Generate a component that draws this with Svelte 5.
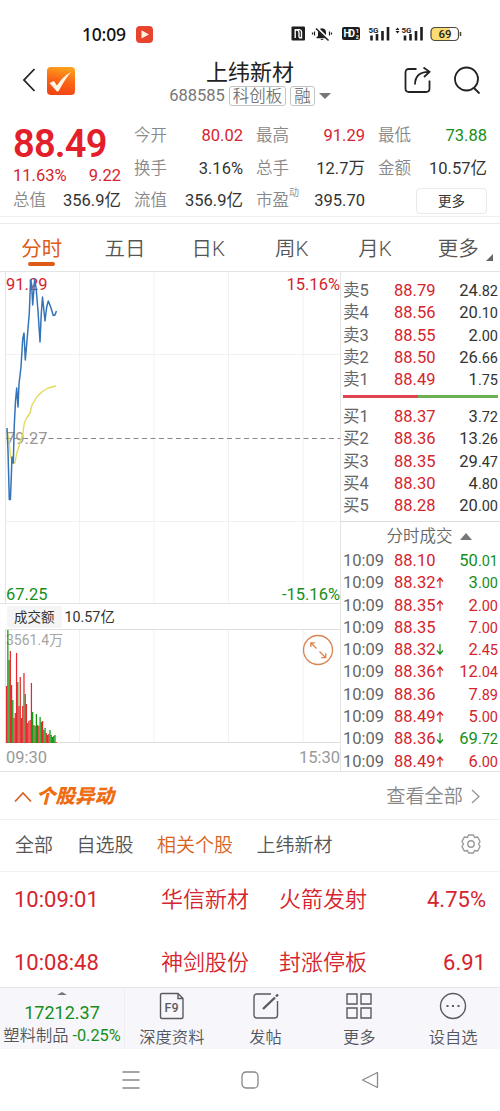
<script>
	const stats = [
		{ label: '今开', value: '80.02', tone: 'up' },
		{ label: '最高', value: '91.29', tone: 'up' },
		{ label: '最低', value: '73.88', tone: 'down' },
		{ label: '换手', value: '3.16%' },
		{ label: '总手', value: '12.7万' },
		{ label: '金额', value: '10.57亿' },
		{ label: '流值', value: '356.9亿' },
		{ label: '市盈', sup: '动', value: '395.70' }
	];

	const periods = ['分时', '五日', '日K', '周K', '月K', '更多'];

	const sells = [
		['卖5', '88.79', '24.82'],
		['卖4', '88.56', '20.10'],
		['卖3', '88.55', '2.00'],
		['卖2', '88.50', '26.66'],
		['卖1', '88.49', '1.75']
	];

	const buys = [
		['买1', '88.37', '3.72'],
		['买2', '88.36', '13.26'],
		['买3', '88.35', '29.47'],
		['买4', '88.30', '4.80'],
		['买5', '88.28', '20.00']
	];

	// time, price, arrow, volume, side
	const trades = [
		['10:09', '88.10', '', '50.01', 'down'],
		['10:09', '88.32', 'up', '3.00', 'down'],
		['10:09', '88.35', 'up', '2.00', 'up'],
		['10:09', '88.35', '', '7.00', 'up'],
		['10:09', '88.32', 'down', '2.45', 'up'],
		['10:09', '88.36', 'up', '12.04', 'up'],
		['10:09', '88.36', '', '7.89', 'up'],
		['10:09', '88.49', 'up', '5.00', 'up'],
		['10:09', '88.36', 'down', '69.72', 'down'],
		['10:09', '88.49', 'up', '6.00', 'up']
	];

	const priceLine =
		'7,157 8,180 9.3,228.5 10.4,228.5 11.2,208 12,186 13.3,192 14.2,156 15.5,130 16.7,117 18,136 19,113 21,96 22.7,68 24,62 25.3,89 27.3,66 29.3,42 30.6,9 31.6,13 32.7,34 34.7,8 36.2,18 38,40 40,71 41.2,44 42.5,26 45,50 46.7,36 48.3,30 50.7,36 53.3,44.5 55,44 56.4,40';
	const averageLine =
		'7,160 8.5,166 10.7,186 12.7,192 15,192 16.7,182 20,172 22.7,164 24.3,152 26.7,147 30,142 32,134 36.7,126 41.7,121 48,117 56,115';

	// one bar per minute: height and side
	const volumes =
		'57r 113g 83g 92r 58r 43g 25r 30r 90r 61g 37r 66r 25r 37r 70r 49g 39r 20r 22r 23r 60r 31g 18r 17g 29g 18g 17r 26g 21g 22r 13g 15g 10r 8g 9r 13g 8g 6g 7g 8g 1r'
			.split(' ')
			.map((v) => ({ h: parseInt(v), color: v.endsWith('r') ? '#e8262b' : '#10960f' }));

	const columns = [79.5, 154, 228.5, 303];

	const feedTabs = ['全部', '自选股', '相关个股', '上纬新材'];
	const feed = [
		['10:09:01', '华信新材', '火箭发射', '4.75%'],
		['10:08:48', '神剑股份', '封涨停板', '6.91']
	];
</script>

{#snippet qty(value)}
	{value.split('.')[0]}<small>.{value.split('.')[1]}</small>
{/snippet}

{#snippet book(rows)}
	{#each rows as [name, price, amount]}
		<div class="line">
			<span class="name">{name}</span>
			<span class="price up">{price}</span>
			<span class="amount">{@render qty(amount)}</span>
		</div>
	{/each}
{/snippet}

<div class="phone">
	<div class="status">
		<span class="clock">10:09</span>
		<svg width="17" height="17" viewBox="0 0 17 17">
			<rect width="17" height="17" rx="4" fill="#e8432f" />
			<path d="M5.5 4.2L13 8.5L5.5 12.6Z" fill="#fff3dc" />
		</svg>
		<svg class="indicators" width="172" height="18" viewBox="0 0 172 18">
			<!-- nfc -->
			<rect x="0.5" y="1.5" width="13.5" height="14" rx="1" fill="#1d1d1f" />
			<path d="M4.2 13V4.8Q8 4.5 8 8V12.5M6.2 4.6H8.5Q10.5 5 10.5 7V12.8H8" stroke="#fff" stroke-width="1.4" fill="none" />
			<!-- muted bell -->
			<path d="M25.5 13.2V12.3L27 11V7.5Q27 3.5 31 3.2Q35 3.5 35 7.5V11L36.5 12.3V13.2ZM29.3 14H32.7Q31 16 29.3 14Z" fill="#1d1d1f" />
			<path d="M26 3L37.5 14.5" stroke="#fff" stroke-width="2.6" />
			<path d="M25 3.5L37.5 15.5" stroke="#1d1d1f" stroke-width="1.5" />
			<path d="M23.5 6.5V10.5M21.5 7.5V9.5M38.5 6.5V10.5M40.5 7.5V9.5" stroke="#1d1d1f" stroke-width="1.2" />
			<!-- hd -->
			<rect x="51" y="2" width="18" height="13" rx="2" fill="#1d1d1f" />
			<text x="52.5" y="12.3" font-size="10" font-weight="700" fill="#fff" textLength="11.5">HD</text>
			<text x="64.8" y="8" font-size="5.5" font-weight="700" fill="#fff">1</text>
			<text x="64.8" y="13.5" font-size="5.5" font-weight="700" fill="#fff">2</text>
			<!-- signals -->
			<text x="77.5" y="7.5" font-size="8" font-weight="700" fill="#1d1d1f">5G</text>
			<path d="M80.5 10.500V15.500M86 9V15.500M91.500 6V15.500M97 2V15.500" stroke="#1d1d1f" stroke-width="2.6" />
			<path d="M104.500 5L106.500 2.500L108.500 5ZM104.500 6L106.500 8.500L108.500 6Z" fill="#1d1d1f" />
			<text x="110.5" y="7.5" font-size="8" font-weight="700" fill="#1d1d1f">5G</text>
			<path d="M114 10.500V15.500M119.500 9V15.500M125 6V15.500M130.500 2V15.500" stroke="#1d1d1f" stroke-width="2.6" />
			<!-- battery -->
			<path d="M144 2.5H159V15.5H144Q140 15.5 140 11.5V6.5Q140 2.5 144 2.5Z" fill="#fbdc72" />
			<rect x="140" y="2.500" width="27.5" height="13" rx="4" fill="none" stroke="#4d4a42" stroke-width="1.2" />
			<path d="M169.5 7V11" stroke="#4d4a42" stroke-width="1.5" />
			<text x="147.5" y="13.2" font-size="11.5" font-weight="500" fill="#1d1d1f">69</text>
		</svg>
	</div>

	<header>
		<svg class="back" width="14" height="24" viewBox="0 0 14 24">
			<path d="M12.5 1L2 12L12.5 23" fill="none" stroke="#222" stroke-width="1.8" />
		</svg>
		<svg class="logo" width="28" height="28" viewBox="0 0 28 28">
			<defs>
				<linearGradient id="flame" x1="0.6" y1="0" x2="0.4" y2="1">
					<stop offset="0" stop-color="#fba21c" />
					<stop offset="0.5" stop-color="#fb6416" />
					<stop offset="1" stop-color="#f04416" />
				</linearGradient>
			</defs>
			<rect width="28" height="28" rx="4" fill="url(#flame)" />
			<path d="M2.5 16L7 14L10 18.5Q15 10 24 5Q18 12 12 23.5Q10.5 25.5 9 23.5Z" fill="#fff6e4" />
		</svg>
		<div class="title">
			<h1>上纬新材</h1>
			<div class="sub">
				<span class="code">688585</span>
				<span class="tag">科创板</span>
				<span class="tag">融</span>
				<i class="caret"></i>
			</div>
		</div>
		<svg class="share" width="28" height="28" viewBox="0 0 28 28" fill="none" stroke="#222" stroke-width="1.8">
			<path d="M13.5 3H6Q2.500 3 2.500 6.500V22.500Q2.500 26 6 26H23Q26.500 26 26.500 22.500V14.500" />
			<path d="M12 18.5Q12 6 25.500 5.800M20.500 1.500L26.500 5.800L21 11" />
		</svg>
		<svg class="search" width="28" height="29" viewBox="0 0 28 29" fill="none" stroke="#222" stroke-width="1.8">
			<circle cx="13.5" cy="13" r="11.5" />
			<path d="M20.5 21.500L26.5 27.500" />
		</svg>
	</header>

	<section class="quote">
		<div class="last">
			<strong>88.49</strong>
			<div class="pair up"><span>11.63%</span><span>9.22</span></div>
			<div class="pair"><span class="label">总值</span><span>356.9亿</span></div>
		</div>
		<div class="stats">
			{#each stats as s}
				<div class="pair">
					<span class="label">{s.label}{#if s.sup}<sup>{s.sup}</sup>{/if}</span>
					<span class={s.tone}>{s.value}</span>
				</div>
			{/each}
			<button class="more">更多</button>
		</div>
	</section>

	<nav class="periods">
		{#each periods as p, i}
			<span class:active={i === 0}>{p}</span>
		{/each}
		<i class="corner"></i>
	</nav>

	<main>
		<div class="charts">
			<div class="chart">
				<svg width="340" height="332" viewBox="0 1 340 332">
					<g stroke="#f1f1f1">
						{#each columns as x}
							<line x1={x} x2={x} y1="0" y2="333" />
						{/each}
						<line x1="5" x2="340" y1="83.5" y2="83.5" />
						<line x1="5" x2="340" y1="250.5" y2="250.5" />
					</g>
					<path d="M5.5 0V333M0 332.5H340" stroke="#e4e4e4" />
					<line x1="6" x2="340" y1="167.5" y2="167.5" stroke="#888" stroke-dasharray="5 3.5" />
				</svg>
				<span class="mark mid">79.27</span>
				<span class="mark top up">91.29</span>
				<svg width="340" height="332" viewBox="0 1 340 332" fill="none" stroke-linejoin="round">
					<polyline points={averageLine} stroke="#e3d95c" stroke-width="1.4" />
					<polyline points={priceLine} stroke="#3474b8" stroke-width="1.5" />
				</svg>
				<span class="mark top right up">15.16%</span>
				<span class="mark bottom down">67.25</span>
				<span class="mark bottom right down">-15.16%</span>
			</div>
			<div class="turnover">
				<span class="chip">成交额</span>
				<span>10.57亿</span>
			</div>
			<div class="volume">
				<span class="mark peak">3561.4万</span>
				<svg class="bars" width="340" height="114" viewBox="0 0 340 114">
					<g stroke="#f1f1f1">
						{#each columns as x}
							<line x1={x} x2={x} y1="0" y2="114" />
						{/each}
					</g>
					<path d="M5.5 0V114M5 0.5H340M5 113.5H340" stroke="#dedede" />
					{#each volumes as v, i}
						<rect x={6 + i * 1.24} y={114 - v.h} width="1.24" height={v.h} fill={v.color} />
					{/each}
				</svg>
				<svg class="expand" width="32" height="32" viewBox="0 0 32 32" fill="none" stroke="#d9834f" stroke-width="1.3">
					<circle cx="16" cy="16" r="14.5" />
					<path d="M14.5 14.5L9 9M8.8 13V8.8H13M17.5 17.5L23.500 23.500M23.700 19.300V23.700H19.300" />
				</svg>
			</div>
			<div class="times"><span>09:30</span><span>15:30</span></div>
		</div>

		<aside>
			<div class="book">{@render book(sells)}</div>
			<div class="ratio"><i></i></div>
			<div class="book">{@render book(buys)}</div>
			<div class="ticks-title">分时成交 <i class="caret flip"></i></div>
			<div class="ticks">
				{#each trades as [time, price, arrow, amount, side]}
					<div class="line">
						<span class="name">{time}</span>
						<span class="price up">{price}{#if arrow}<svg class={arrow} width="8" height="11" viewBox="0 0 8 11"><path d={arrow === 'up' ? 'M4 11V1M1 4.5L4 1L7 4.5' : 'M4 0V10M1 6.5L4 10L7 6.5'} fill="none" stroke="currentColor" stroke-width="1.2" /></svg>{/if}</span>
						<span class="amount {side}">{@render qty(amount)}</span>
					</div>
				{/each}
			</div>
		</aside>
	</main>

	<section class="feed">
		<div class="feed-head">
			<svg width="18" height="12" viewBox="0 0 18 12">
				<path d="M1 10.5L9 2L17 10.5" fill="none" stroke="#d8622a" stroke-width="1.8" />
			</svg>
			<h2>个股异动</h2>
			<span class="all">查看全部</span>
			<svg width="9" height="15" viewBox="0 0 9 15">
				<path d="M1 1L8 7.5L1 14" fill="none" stroke="#999" stroke-width="1.5" />
			</svg>
		</div>
		<div class="feed-tabs">
			{#each feedTabs as t, i}
				<span class:active={i === 2}>{t}</span>
			{/each}
			<svg width="20" height="20" viewBox="0 0 20 20" fill="none" stroke="#999" stroke-width="1.4">
				<path d="M7.5 1H12.5L13.5 3.5L16.700 3L19 7.500L17.500 10L19 12.500L16.700 17L13.500 16.500L12.500 19H7.500L6.500 16.500L3.300 17L1 12.500L2.500 10L1 7.500L3.300 3L6.500 3.500Z" stroke-linejoin="round" />
				<circle cx="10" cy="10" r="3.2" />
			</svg>
		</div>
		{#each feed as [time, stock, event, value]}
			<div class="feed-row up">
				<span>{time}</span><span class="thin">{stock}</span><span class="thin">{event}</span><span>{value}</span>
			</div>
		{/each}
	</section>

	<footer>
		<div class="index">
			<i class="notch"></i>
			<b>17212.37</b>
			<span>塑料制品 <em>-0.25%</em></span>
		</div>
		<div class="action">
			<svg width="28" height="28" viewBox="0 0 28 28" fill="none" stroke="#5a5a62" stroke-width="1.4">
				<path d="M20 1.500H4Q2.500 1.500 2.500 3V25Q2.500 26.500 4 26.500H23.500Q25 26.500 25 25V6.500ZM20 1.500V6.500H25" />
				<text x="6.500" y="20" font-size="12.5" font-weight="500" fill="#5a5a62" stroke="none">F9</text>
			</svg>
			<span>深度资料</span>
		</div>
		<div class="action">
			<svg width="28" height="28" viewBox="0 0 28 28" fill="none" stroke="#5a5a62" stroke-width="1.4">
				<path d="M19 2H5Q2 2 2 5V23Q2 26 5 26H22.5Q25.5 26 25.5 23V9" />
				<path d="M11 17L23 5.500M24 4.500L26 2.500" stroke-width="2.4" />
			</svg>
			<span>发帖</span>
		</div>
		<div class="action">
			<svg width="28" height="28" viewBox="0 0 28 28" fill="none" stroke="#5a5a62" stroke-width="1.4">
				<path d="M2 2H12V12H2ZM16 2H26V12H16ZM2 16H12V26H2ZM16 16H26V26H16Z" />
			</svg>
			<span>更多</span>
		</div>
		<div class="action">
			<svg width="28" height="28" viewBox="0 0 28 28" fill="none" stroke="#5a5a62" stroke-width="1.4">
				<circle cx="14" cy="14" r="12.5" />
				<path d="M7.5 14H9.5M13 14H15M18.5 14H20.5" stroke-width="2" />
			</svg>
			<span>设自选</span>
		</div>
	</footer>

	<div class="system">
		<svg width="18" height="18" viewBox="0 0 18 18"><path d="M0.5 1H17.5M0.5 9H17.5M0.5 17H17.5" /></svg>
		<svg width="18" height="18" viewBox="0 0 18 18"><rect x="1" y="1" width="16" height="16" rx="4" /></svg>
		<svg width="18" height="18" viewBox="0 0 18 18"><path d="M16.5 1.5V16.5L1.5 9Z" stroke-linejoin="round" /></svg>
	</div>
</div>

<style>
	:global(body) {
		background: #fff;
	}

	.phone {
		width: 500px;
		height: 1111px;
		overflow: hidden;
		box-sizing: border-box;
		background: #fff;
		color: #333;
		font-family: Roboto, "Noto Sans CJK SC", sans-serif;
		font-size: 16.5px;
		font-weight: 400;
		line-height: 22px;
	}

	.phone * {
		box-sizing: border-box;
	}

	svg {
		display: block;
		flex: none;
	}

	.up {
		color: #d5242d;
	}

	.down {
		color: #168e18;
	}

	.status {
		height: 60px;
		padding: 8px 37px 0 82px;
		display: flex;
		align-items: center;
	}

	.clock {
		font-family: "Noto Sans", sans-serif;
		font-size: 17.5px;
		font-weight: 500;
		letter-spacing: -0.2px;
		color: #111;
		width: 54px;
	}

	.indicators {
		margin-left: auto;
	}

	header {
		height: 50px;
		padding: 0 19px 0 22px;
		display: flex;
	}

	.back {
		margin-top: 8px;
	}

	.logo {
		margin: 7px 0 0 11px;
	}

	.title {
		flex: 1;
		display: flex;
		flex-direction: column;
		align-items: center;
		padding-left: 22px;
	}

	h1 {
		margin: 0;
		font-size: 22px;
		font-weight: 400;
		line-height: 25px;
		color: #222;
	}

	.sub {
		display: flex;
		align-items: center;
		gap: 4px;
		height: 21px;
		color: #777;
	}

	.tag {
		height: 20px;
		line-height: 19px;
		padding: 0 3px;
		border: 1px solid #c4c4c4;
		border-radius: 3px;
		font-weight: 350;
	}

	.caret {
		border: 6px solid transparent;
		border-top-color: #777;
		border-bottom: 0;
	}

	.caret.flip {
		display: inline-block;
		border: 6px solid transparent;
		border-bottom: 7px solid #777;
		border-top: 0;
		margin: 0 0 2px 3px;
	}

	.share {
		margin-top: 6px;
	}

	.search {
		margin: 6px 0 0 22px;
	}

	.quote {
		height: 107px;
		display: flex;
		padding: 9px 13px 0;
		border-bottom: 1px solid #f0f0f0;
	}

	.last {
		width: 108px;
		margin-right: 13px;
	}

	.last strong {
		display: block;
		height: 46px;
		line-height: 50px;
		font-size: 38px;
		font-weight: 600;
		letter-spacing: -0.8px;
		color: #e3202a;
	}

	.pair {
		display: flex;
		justify-content: space-between;
		white-space: nowrap;
	}

	.last .pair {
		height: 25px;
	}

	.label {
		color: #888;
		font-weight: 350;
	}

	sup {
		font-size: 10px;
		line-height: 0;
		vertical-align: 10px;
	}

	.stats {
		flex: 1;
		display: grid;
		grid-template-columns: repeat(3, 109px);
		column-gap: 13px;
		grid-auto-rows: 32.5px;
		padding-top: 6px;
	}

	.more {
		width: 71px;
		height: 26px;
		margin-top: -2px;
		justify-self: end;
		border: 1px solid #e9e9e9;
		border-radius: 4px;
		background: #fff;
		padding: 0;
		font: inherit;
		font-size: 13.5px;
		line-height: 24px;
		color: #333;
	}

	.periods {
		position: relative;
		height: 48px;
		margin-top: 6px;
		display: grid;
		grid-template-columns: repeat(6, 1fr);
		border-top: 1px solid #eaeaea;
		text-align: center;
		font-size: 20.5px;
		font-weight: 350;
		line-height: 50px;
		color: #555;
	}

	.periods .active {
		position: relative;
		color: #dd5a17;
		font-weight: 400;
	}

	.periods .active::after {
		content: '';
		position: absolute;
		left: 28px;
		bottom: 5px;
		width: 27px;
		height: 4px;
		border-radius: 2px;
		background: #dd5a17;
		transform: translateY(-3px);
	}

	.corner {
		position: absolute;
		right: 7px;
		bottom: 10px;
		border-left: 7px solid transparent;
		border-bottom: 7px solid #666;
	}

	main {
		height: 501px;
		display: flex;
		border-top: 1px solid #e0e6e6;
		border-bottom: 1px solid #e2e2e2;
	}

	.charts {
		width: 341px;
		border-right: 1px solid #e4e4e4;
	}

	.chart {
		position: relative;
		height: 332px;
	}

	.chart svg {
		position: absolute;
		inset: 0;
	}

	.mark {
		position: absolute;
		left: 6px;
		line-height: 20px;
	}

	.mark.right {
		left: auto;
		right: 0;
	}

	.top {
		top: 3px;
	}

	.mid {
		top: 157px;
		color: #999;
	}

	.bottom {
		bottom: -1px;
	}

	.turnover {
		height: 25px;
		display: flex;
		align-items: center;
		gap: 3px;
		padding-left: 7px;
		font-size: 14.3px;
	}

	.chip {
		padding: 0 7px;
		background: #f5f5f5;
		border-radius: 3px;
		font-size: 13.5px;
	}

	.volume {
		position: relative;
		height: 114px;
	}

	.peak {
		color: #a5a5a5;
		font-size: 14px;
		top: 1px;
	}

	.bars {
		position: relative;
	}

	.expand {
		position: absolute;
		right: 6px;
		top: 5px;
	}

	.times {
		display: flex;
		justify-content: space-between;
		padding: 4px 0 0 6px;
		color: #999;
	}

	aside {
		flex: 1;
		padding: 0 2px;
	}

	.line {
		display: grid;
		grid-template-columns: 51px 1fr auto;
		height: 22.3px;
		line-height: 22.3px;
	}

	.name {
		color: #666;
	}

	.price svg {
		display: inline-block;
		margin-left: 1px;
	}

	.amount small {
		font-size: 14.5px;
	}

	.book {
		height: 123px;
		padding-top: 8px;
	}

	.ratio {
		height: 3px;
		background: #6cb052;
	}

	.ratio i {
		display: block;
		width: 48.5%;
		height: 3px;
		background: #df4450;
	}

	.ticks-title {
		margin: 0 -2px;
		padding-left: 17px;
		height: 29px;
		line-height: 29px;
		border-top: 1px solid #ddd;
		text-align: center;
		font-weight: 350;
		color: #666;
	}

	.feed-head {
		height: 48px;
		display: flex;
		align-items: center;
		padding: 2px 20px 0 14px;
		border-bottom: 1px solid #f1f1f1;
	}

	h2 {
		margin: 0 auto 0 4px;
		font-size: 19.5px;
		font-weight: 900;
		font-style: italic;
		color: #ee6c12;
	}

	.all {
		margin: 1px 8px 0 0;
		font-size: 19.2px;
		font-weight: 350;
		color: #888;
	}

	.feed-tabs {
		height: 52px;
		display: flex;
		align-items: center;
		gap: 23.5px;
		padding: 0 19px 0 15px;
		border-bottom: 1px solid #f1f1f1;
		font-size: 19px;
		font-weight: 350;
		color: #555;
	}

	.feed-tabs .active {
		color: #d8621c;
	}

	.feed-tabs svg {
		margin: 0 0 4px auto;
	}

	.feed-row {
		height: 62.5px;
		display: grid;
		grid-template-columns: 147px 118px 1fr auto;
		align-items: center;
		padding: 0 14px 6px;
		font-size: 22px;
	}

	.thin {
		font-weight: 350;
	}

	.feed {
		height: 215px;
		overflow: hidden;
	}

	footer {
		height: 62px;
		display: grid;
		grid-template-columns: 125px repeat(4, 1fr);
		background: #f7f7fb;
		border-top: 1px solid #e6e6e8;
		font-size: 16.3px;
		font-weight: 350;
		color: #55555c;
	}

	.index {
		display: flex;
		flex-direction: column;
		align-items: center;
		border-right: 1px solid #eeeef2;
		color: #555;
		white-space: nowrap;
	}

	.notch {
		margin-top: 4px;
		border: 5px solid transparent;
		border-bottom: 3px solid #777;
		border-top: 0;
	}

	.index b {
		margin: 7px 0 1px;
		font-size: 18px;
		font-weight: 400;
		color: #168e18;
	}

	.index em {
		font-style: normal;
		font-weight: 400;
		color: #168e18;
	}

	.action {
		display: flex;
		flex-direction: column;
		align-items: center;
		padding-top: 4px;
		gap: 7px;
	}

	.system {
		height: 62px;
		display: flex;
		justify-content: center;
		align-items: center;
		gap: 101.5px;
	}

	.system svg {
		fill: none;
		stroke: #888;
		stroke-width: 1.3;
	}
</style>
